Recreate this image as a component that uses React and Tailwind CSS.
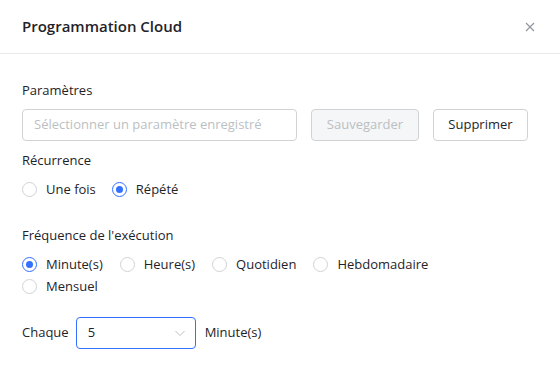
import React, { useState } from 'react';

const Radio = ({ label, checked, onClick }) => (
  <label className="flex items-center gap-[9px] cursor-pointer" onClick={onClick}>
    <span
      className={
        'w-[15px] h-[15px] rounded-full border flex items-center justify-center bg-white ' +
        (checked ? 'border-[#3370ff]' : 'border-[#d0d3d6]')
      }
    >
      {checked && <span className="w-[7px] h-[7px] rounded-full bg-[#3370ff]" />}
    </span>
    <span>{label}</span>
  </label>
);

const App = () => {
  const [recurrence, setRecurrence] = useState('repete');
  const [freq, setFreq] = useState('minute');

  return (
    <div
      className="w-[560px] h-[368px] bg-white text-[13px] text-[#1f2329] overflow-hidden"
      style={{ fontFamily: '"Open Sans", "Noto Sans", sans-serif' }}
    >
      <div className="h-[54px] flex items-center justify-between pl-[22px] pr-[25px] border-b border-[#e8e9eb]">
        <h2 className="text-[15px] font-semibold text-[#1f2329]">Programmation Cloud</h2>
        <svg width="10" height="10" viewBox="0 0 10 10" className="text-[#8f959e]">
          <path d="M1 1 L9 9 M9 1 L1 9" stroke="currentColor" strokeWidth="1.1" />
        </svg>
      </div>

      <div className="px-[22px] pt-[26px]">
        <div className="leading-[20px]">Paramètres</div>
        <div className="flex gap-[14px] mt-[9px]">
          <div className="w-[275px] h-[32px] border border-[#d0d3d6] rounded-[4px] flex items-center px-[11px] text-[#bbbfc4]">
            Sélectionner un paramètre enregistré
          </div>
          <button className="w-[108px] h-[32px] border border-[#d0d3d6] rounded-[4px] bg-[#f5f6f7] text-[#bbbfc4]">
            Sauvegarder
          </button>
          <button className="w-[95px] h-[32px] border border-[#d0d3d6] rounded-[4px] bg-white text-[#1f2329]">
            Supprimer
          </button>
        </div>

        <div className="leading-[20px] mt-[9px]">Récurrence</div>
        <div className="flex gap-[16px] mt-[9px] leading-[20px]">
          <Radio label="Une fois" checked={recurrence === 'once'} onClick={() => setRecurrence('once')} />
          <Radio label="Répété" checked={recurrence === 'repete'} onClick={() => setRecurrence('repete')} />
        </div>

        <div className="leading-[20px] mt-[26px]">Fréquence de l'exécution</div>
        <div className="flex flex-wrap w-[440px] gap-x-[17px] gap-y-[2px] mt-[9px] leading-[20px]">
          <Radio label="Minute(s)" checked={freq === 'minute'} onClick={() => setFreq('minute')} />
          <Radio label="Heure(s)" checked={freq === 'heure'} onClick={() => setFreq('heure')} />
          <Radio label="Quotidien" checked={freq === 'jour'} onClick={() => setFreq('jour')} />
          <Radio label="Hebdomadaire" checked={freq === 'semaine'} onClick={() => setFreq('semaine')} />
          <Radio label="Mensuel" checked={freq === 'mois'} onClick={() => setFreq('mois')} />
        </div>

        <div className="flex items-center gap-[7px] mt-[21px]">
          <span>Chaque</span>
          <div className="w-[120px] h-[32px] border border-[#3370ff] rounded-[4px] flex items-center justify-between pl-[11px] pr-[9px]">
            <span>5</span>
            <svg width="12" height="12" viewBox="0 0 12 12" className="text-[#bbbfc4]">
              <path d="M1.5 4 L6 8.5 L10.5 4" fill="none" stroke="currentColor" strokeWidth="1" />
            </svg>
          </div>
          <span className="ml-[2px]">Minute(s)</span>
        </div>
      </div>
    </div>
  );
};

export default App;
